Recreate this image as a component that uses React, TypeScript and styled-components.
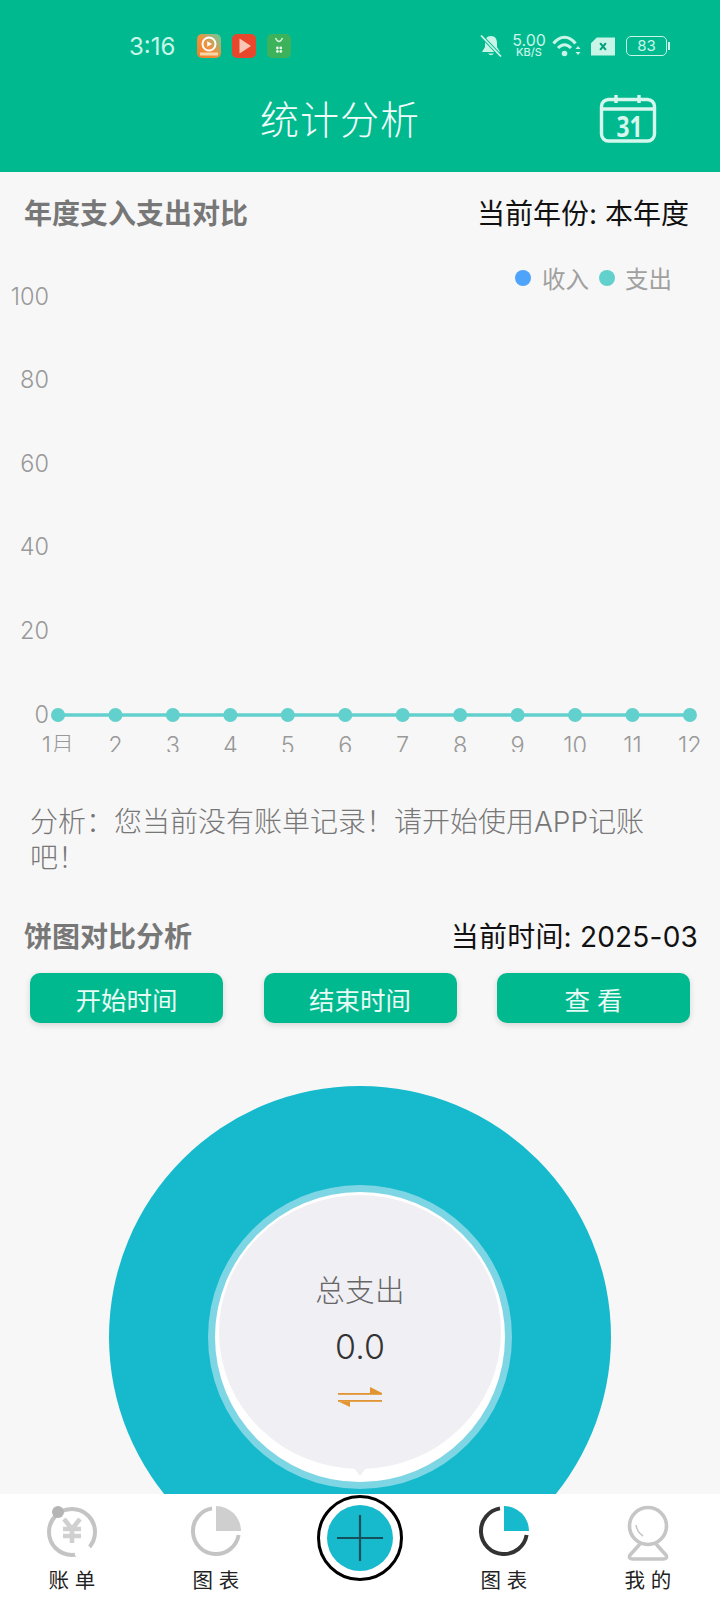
import styled, { createGlobalStyle } from "styled-components";

const GlobalStyle = createGlobalStyle`
  html, body {
    margin: 0;
    padding: 0;
    background: #f7f7f7;
    font-family: Inter, "Noto Sans CJK SC", sans-serif;
  }
  * {
    box-sizing: border-box;
  }
`;

const months = ["1月", "2", "3", "4", "5", "6", "7", "8", "9", "10", "11", "12"];
const yTicks = [100, 80, 60, 40, 20, 0];

export default function App() {
  return (
    <Page>
      <GlobalStyle />
      <Header>
        <StatusBar>
          <Time>3:16</Time>
          <AppIcons>
            <VideoAppIcon />
            <PlayAppIcon />
            <ShopAppIcon />
          </AppIcons>
          <StatusRight>
            <MutedBell />
            <NetSpeed>
              <span className="value">5.00</span>
              <span className="unit">KB/S</span>
            </NetSpeed>
            <WifiIcon />
            <SimIcon />
            <BatteryIcon />
          </StatusRight>
        </StatusBar>
        <TitleRow>
          <Title>统计分析</Title>
          <CalendarIcon />
        </TitleRow>
      </Header>

      <Content>
        <SectionRow $height={82}>
          <SectionTitle>年度支入支出对比</SectionTitle>
          <SectionInfo>当前年份: 本年度</SectionInfo>
        </SectionRow>
        <LineChart />
        <Analysis>分析：您当前没有账单记录！请开始使用APP记账吧！</Analysis>
        <SectionRow $height={60} $top={30}>
          <SectionTitle>饼图对比分析</SectionTitle>
          <SectionInfo $flush>当前时间: 2025-03</SectionInfo>
        </SectionRow>
        <ButtonRow>
          <ActionButton>开始时间</ActionButton>
          <ActionButton>结束时间</ActionButton>
          <ActionButton>查 看</ActionButton>
        </ButtonRow>
        <Donut>
          <DonutRing>
            <DonutWhite>
              <DonutCenter>
                <TotalLabel>总支出</TotalLabel>
                <TotalValue>0.0</TotalValue>
                <SwapIcon />
              </DonutCenter>
            </DonutWhite>
          </DonutRing>
        </Donut>
      </Content>

      <TabBar>
        <Tab>
          <BillIcon />
          <TabLabel>账 单</TabLabel>
        </Tab>
        <Tab>
          <PieIcon ring="#c4c4c4" slice="#cfcfcf" />
          <TabLabel>图 表</TabLabel>
        </Tab>
        <Tab>
          <AddButton>
            <AddDisc>
              <PlusIcon />
            </AddDisc>
          </AddButton>
        </Tab>
        <Tab>
          <PieIcon ring="#333333" slice="#17b9cc" />
          <TabLabel>图 表</TabLabel>
        </Tab>
        <Tab>
          <MeIcon />
          <TabLabel>我 的</TabLabel>
        </Tab>
      </TabBar>
    </Page>
  );
}

function LineChart() {
  const pointX = (i: number) => 58 + i * 57.45;
  return (
    <ChartSvg viewBox="0 0 720 498" width={720} height={498}>
      <circle cx={523} cy={24} r={8} fill="#4ea3fb" />
      <LegendText x={542} y={34}>收入</LegendText>
      <circle cx={607} cy={24} r={8} fill="#62d0cc" />
      <LegendText x={625} y={34}>支出</LegendText>
      {yTicks.map((tick, i) => (
        <AxisText key={tick} x={49} y={50.5 + i * 83.6} textAnchor="end">
          {tick}
        </AxisText>
      ))}
      <line x1={58} y1={461} x2={690} y2={461} stroke="#62d0cc" strokeWidth={3.5} />
      {months.map((m, i) => (
        <g key={m}>
          <circle cx={pointX(i)} cy={461} r={7} fill="#62d0cc" />
          <AxisText x={pointX(i)} y={500} textAnchor="middle">
            {m}
          </AxisText>
        </g>
      ))}
    </ChartSvg>
  );
}

function VideoAppIcon() {
  return (
    <svg width={24} height={24} viewBox="0 0 24 24">
      <defs>
        <linearGradient id="videoBg" x1="1" y1="0" x2="0" y2="1">
          <stop offset="0" stopColor="#5fcfa8" />
          <stop offset="0.5" stopColor="#f0923c" />
          <stop offset="1" stopColor="#ee7f2a" />
        </linearGradient>
      </defs>
      <rect width={24} height={24} rx={5} fill="url(#videoBg)" />
      <circle cx={12} cy={10} r={6.5} fill="none" stroke="#fff" strokeWidth={2} />
      <path d="M10.2 7.3 L15 10 L10.2 12.7 Z" fill="#fff" />
      <rect x={3} y={18.5} width={18} height={3} fill="#f8d7a8" />
    </svg>
  );
}

function PlayAppIcon() {
  return (
    <svg width={24} height={24} viewBox="0 0 24 24">
      <rect width={24} height={24} rx={5} fill="#e8472c" />
      <path d="M7.5 4.5 L19 12 L7.5 19.5 Z" fill="#f9c6b6" />
    </svg>
  );
}

function ShopAppIcon() {
  return (
    <svg width={24} height={24} viewBox="0 0 24 24">
      <rect width={24} height={24} rx={5} fill="#3cb35a" />
      <path d="M8.5 4 Q12 11 15.5 4" fill="none" stroke="#dff5e2" strokeWidth={1.4} />
      <g fill="#eaf8ec">
        <circle cx={10.4} cy={14} r={1.4} />
        <circle cx={13.8} cy={14} r={1.4} />
        <circle cx={10.4} cy={17.4} r={1.4} />
        <circle cx={13.8} cy={17.4} r={1.4} />
      </g>
    </svg>
  );
}

function MutedBell() {
  return (
    <svg width={22} height={22} viewBox="0 0 22 22">
      <path
        d="M11 1 C6.5 1 5 4.5 5 8 L5 12 L2 17 L20 17 L17 12 L17 8 C17 4.5 15.5 1 11 1 Z"
        fill="#c8f5e8"
      />
      <path d="M8 18.5 Q11 22 14 18.5 Z" fill="#c8f5e8" />
      <line x1={1} y1={0.5} x2={21} y2={21.5} stroke="#00b98f" strokeWidth={3.6} />
      <line x1={1} y1={0.5} x2={21} y2={21.5} stroke="#c8f5e8" strokeWidth={1.8} />
    </svg>
  );
}

function WifiIcon() {
  return (
    <WifiSvg width={30} height={22} viewBox="0 0 30 22">
      <g fill="none" stroke="#c8f5e8" strokeWidth={3}>
        <path d="M1.5 8.5 C8 0 17 0 23.5 8.5" />
        <path d="M6 13 C10 8.5 15 8.5 19 13" />
      </g>
      <circle cx={12.5} cy={18.5} r={2.8} fill="#c8f5e8" />
      <path d="M23.5 14 L26 11 L28.5 14 Z M23.5 17 L28.5 17 L26 20 Z" fill="#c8f5e8" />
    </WifiSvg>
  );
}

function SimIcon() {
  return (
    <SimSvg width={24} height={19} viewBox="0 0 25 19">
      <path d="M6 0 L25 0 L25 19 L0 19 L0 6 Z" fill="#c8f5e8" />
      <path d="M9.5 6 L15.5 13 M15.5 6 L9.5 13" stroke="#00a07c" strokeWidth={2.2} />
    </SimSvg>
  );
}

function BatteryIcon() {
  return (
    <BatteryWrap>
      <BatteryBody>83</BatteryBody>
      <BatteryCap />
    </BatteryWrap>
  );
}

function CalendarIcon() {
  return (
    <CalendarSvg width={58} height={50} viewBox="0 0 58 50">
      <g stroke="#d6f7ee" strokeWidth={3.4}>
        <rect x={2.5} y={4.5} width={53} height={41.5} rx={7} fill="none" />
        <line x1={2.5} y1={14} x2={55.5} y2={14} />
        <line x1={17} y1={0} x2={17} y2={8} />
        <line x1={40} y1={0} x2={40} y2={8} />
      </g>
      <CalendarDay x={17.5} y={41.5} textLength={26} lengthAdjust="spacingAndGlyphs">31</CalendarDay>
    </CalendarSvg>
  );
}

function SwapIcon() {
  return (
    <SwapSvg width={44} height={20} viewBox="0 0 44 20">
      <g fill="#e09530">
        <rect x={0} y={6} width={44} height={1.8} />
        <rect x={0} y={13} width={44} height={1.8} />
        <path d="M32 0 L44 6 L32 6 Z" />
        <path d="M12 20 L1 14.8 L12 14.8 Z" />
      </g>
    </SwapSvg>
  );
}

function BillIcon() {
  return (
    <svg width={52} height={56} viewBox="0 0 52 56">
      <circle cx={26} cy={27} r={23} fill="none" stroke="#c4c4c4" strokeWidth={4} />
      <circle cx={12} cy={7} r={6} fill="#b5b5b5" />
      <circle cx={37} cy={47} r={8.5} fill="#ffffff" />
      <g fill="none" stroke="#d0d0d0" strokeWidth={4.6}>
        <path d="M18 14 L26 24 L34 14" />
        <path d="M17 24 L35 24 M17 31 L35 31 M26 24 L26 38" />
      </g>
    </svg>
  );
}

function PieIcon({ ring, slice }: { ring: string; slice: string }) {
  return (
    <svg width={52} height={52} viewBox="0 0 52 52">
      <path
        d="M22 3.4 A23 23 0 1 0 48.6 30"
        fill="none"
        stroke={ring}
        strokeWidth={4}
      />
      <path d="M26 1 A25 25 0 0 1 51 26 L26 26 Z" fill={slice} />
    </svg>
  );
}

function MeIcon() {
  return (
    <svg width={42} height={56} viewBox="0 0 42 56">
      <g fill="none" stroke="#c6c6c6" strokeWidth={3.6}>
        <circle cx={21} cy={21} r={18.5} />
        <path d="M13 39 L3 50 Q1 54 6 54 L36 54 Q41 54 39 50 L29 39" />
      </g>
      <path d="M9 20 Q10 27 16 31" fill="none" stroke="#c6c6c6" strokeWidth={1.6} />
    </svg>
  );
}

function PlusIcon() {
  return (
    <svg width={46} height={46} viewBox="0 0 46 46">
      <path d="M23 0 L23 46 M0 23 L46 23" stroke="#164f5c" strokeWidth={2.2} />
    </svg>
  );
}

const Page = styled.div`
  width: 720px;
  height: 1600px;
  display: flex;
  flex-direction: column;
  overflow: hidden;
  background: #f7f7f7;
`;

const Header = styled.header`
  flex: none;
  height: 172px;
  background: #00b98f;
  display: flex;
  flex-direction: column;
`;

const StatusBar = styled.div`
  height: 34px;
  margin-top: 29px;
  padding: 0 50px 0 129px;
  display: flex;
  align-items: center;
  color: #c8f5e8;
`;

const Time = styled.div`
  font-size: 24px;
  width: 68px;
`;

const AppIcons = styled.div`
  display: flex;
  gap: 11px;
`;

const StatusRight = styled.div`
  margin-left: auto;
  display: flex;
  align-items: center;
`;

const NetSpeed = styled.div`
  margin-left: 9px;
  width: 36px;
  display: flex;
  flex-direction: column;
  align-items: center;

  .value {
    font-size: 16px;
    line-height: 13px;
  }

  .unit {
    font-size: 11px;
    line-height: 11px;
    font-weight: 500;
  }
`;

const WifiSvg = styled.svg`
  margin-left: 5px;
`;

const SimSvg = styled.svg`
  margin-left: 9px;
`;

const BatteryWrap = styled.div`
  margin-left: 11px;
  display: flex;
  align-items: center;
  gap: 1px;
`;

const BatteryBody = styled.div`
  width: 41px;
  height: 20px;
  border: 1.5px solid #c8f5e8;
  border-radius: 5px;
  font-size: 15px;
  line-height: 17px;
  text-align: center;
`;

const BatteryCap = styled.div`
  width: 2px;
  height: 8px;
  background: #c8f5e8;
`;

const TitleRow = styled.div`
  height: 60px;
  margin-top: 24px;
  padding: 0 63px 0 260px;
  display: flex;
  align-items: center;
  justify-content: space-between;
`;

const Title = styled.h1`
  margin: 0;
  font-size: 39px;
  font-weight: 300;
  color: #f2fdfa;
  letter-spacing: 1px;
`;

const CalendarSvg = styled.svg`
  margin-top: 6px;
`;

const CalendarDay = styled.text`
  font-family: "Open Sans", sans-serif;
  font-size: 28px;
  font-weight: 700;
  fill: #d6f7ee;
`;

const Content = styled.main`
  flex: 1;
  min-height: 0;
  overflow: hidden;
`;

const SectionRow = styled.div<{ $height: number; $top?: number }>`
  height: ${(p) => p.$height}px;
  margin-top: ${(p) => p.$top ?? 0}px;
  padding: 0 22px 3px 24px;
  display: flex;
  align-items: center;
  justify-content: space-between;
`;

const SectionTitle = styled.div`
  font-size: 28px;
  font-weight: 700;
  color: #777777;
`;

const SectionInfo = styled.div<{ $flush?: boolean }>`
  font-size: 28px;
  letter-spacing: ${(p) => (p.$flush ? "0.2px" : "0")};
  color: #111111;
  margin-right: ${(p) => (p.$flush ? "0" : "9px")};
`;

const ChartSvg = styled.svg`
  display: block;
`;

const LegendText = styled.text`
  font-size: 23.5px;
  fill: #a0a0a0;
`;

const AxisText = styled.text`
  font-size: 23.5px;
  font-weight: 300;
  fill: #999999;
`;

const Analysis = styled.p`
  width: 640px;
  margin: 52px 0 0 30px;
  font-size: 28px;
  line-height: 36px;
  font-weight: 300;
  color: #777777;
`;

const ButtonRow = styled.div`
  margin-top: 7px;
  padding: 0 30px;
  display: flex;
  justify-content: space-between;
`;

const ActionButton = styled.button`
  width: 193px;
  height: 50px;
  padding: 0;
  border: none;
  border-radius: 10px;
  background: #00b98f;
  box-shadow: 0 2px 6px rgba(0, 0, 0, 0.14);
  font-family: inherit;
  font-size: 25.5px;
  color: #e8fbf5;
`;

const Donut = styled.div`
  width: 502px;
  height: 502px;
  margin: 63px auto 0;
  border-radius: 50%;
  background: #17b9cc;
  display: flex;
  align-items: center;
  justify-content: center;
`;

const DonutRing = styled.div`
  width: 304px;
  height: 304px;
  border-radius: 50%;
  background: #7ed6e4;
  display: flex;
  align-items: center;
  justify-content: center;
`;

const DonutWhite = styled.div`
  width: 290px;
  height: 290px;
  border-radius: 50%;
  background: #ffffff;
  display: flex;
  justify-content: center;
  padding-top: 3px;
`;

const DonutCenter = styled.div`
  position: relative;
  width: 282px;
  height: 274px;
  border-radius: 50%;
  background: #f0eff4;
  display: flex;
  flex-direction: column;
  align-items: center;
  padding-top: 75px;

  &::after {
    content: "";
    position: absolute;
    left: 50%;
    bottom: -7px;
    margin-left: -7px;
    border-left: 7px solid transparent;
    border-right: 7px solid transparent;
    border-top: 9px solid #f0eff4;
  }
`;

const TotalLabel = styled.div`
  font-size: 29.5px;
  line-height: 40px;
  font-weight: 300;
  letter-spacing: 0.3px;
  color: #666666;
`;

const TotalValue = styled.div`
  margin-top: 16px;
  font-size: 34px;
  line-height: 42px;
  font-weight: 300;
  color: #333333;
`;

const SwapSvg = styled.svg`
  margin-top: 19px;
`;

const TabBar = styled.nav`
  flex: none;
  height: 106px;
  background: #ffffff;
  display: grid;
  grid-template-columns: repeat(5, 144px);
`;

const Tab = styled.div`
  height: 106px;
  padding-top: 11px;
  display: flex;
  flex-direction: column;
  align-items: center;

  svg {
    flex: none;
  }
`;

const TabLabel = styled.div`
  margin-top: auto;
  margin-bottom: 7px;
  font-size: 20.5px;
  line-height: 24px;
  color: #222222;
  white-space: pre;
`;

const AddButton = styled.div`
  width: 86px;
  height: 86px;
  margin-top: -10px;
  border: 3px solid #000000;
  border-radius: 50%;
  background: #ffffff;
  display: flex;
  align-items: center;
  justify-content: center;
`;

const AddDisc = styled.div`
  width: 66px;
  height: 66px;
  border-radius: 50%;
  background: #17b9cc;
  display: flex;
  align-items: center;
  justify-content: center;
`;
